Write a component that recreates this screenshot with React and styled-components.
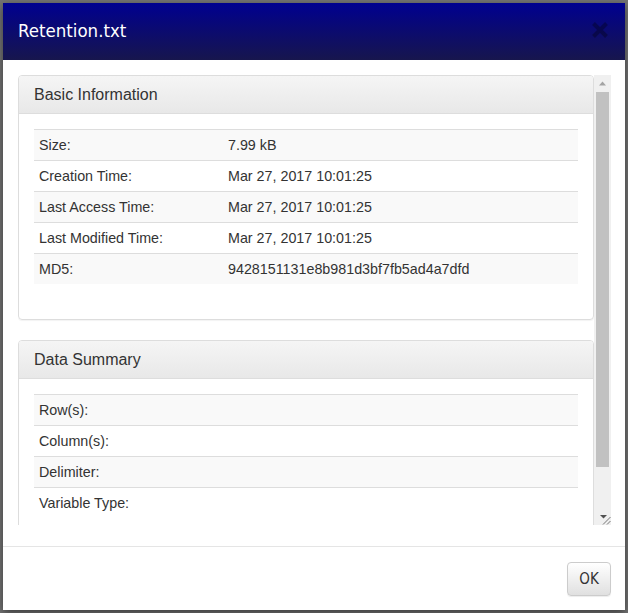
import React from 'react'
import styled, { createGlobalStyle } from 'styled-components'

const Global = createGlobalStyle`
  html, body {
    margin: 0;
    height: 100%;
  }
  body {
    background: #747474;
    padding: 3px;
    box-sizing: border-box;
    font-family: "Liberation Sans", Arial, sans-serif;
    color: #333;
  }
`

const Dialog = styled.div`
  width: 622px;
  height: 607px;
  background: #fff;
  display: flex;
  flex-direction: column;
  box-shadow: 0 3px 9px rgba(0, 0, 0, 0.5);
`

const Header = styled.div`
  height: 57px;
  flex-shrink: 0;
  display: flex;
  align-items: center;
  justify-content: space-between;
  padding: 0 16px 0 15px;
  background: linear-gradient(#000090, #17164d);
`

const Title = styled.h4`
  margin: 0 0 2px;
  font-family: "DejaVu Sans Condensed", sans-serif;
  font-size: 18.5px;
  font-weight: normal;
  color: #fff;
`

const Close = styled.button`
  border: 0;
  padding: 0;
  background: none;
  width: 18px;
  height: 18px;
  margin-bottom: 4px;
  display: flex;
  opacity: 0.3;
`

const Body = styled.div`
  padding: 15px 14px 21px 15px;
`

const ScrollFrame = styled.div`
  height: 450px;
  display: flex;
`

const Viewport = styled.div`
  flex: 1;
  overflow: hidden;
`

const ScrollBar = styled.div`
  width: 17px;
  flex-shrink: 0;
  display: flex;
  flex-direction: column;
  background: #f0f0f0;
`

const ArrowButton = styled.div`
  height: 17px;
  flex-shrink: 0;
  display: flex;
`

const Thumb = styled.div`
  height: ${p => p.$size}px;
  margin: 0 2px;
  background: #c1c1c1;
`

const Track = styled.div`
  flex: 1;
`

const Panel = styled.div`
  border: 1px solid #ddd;
  border-radius: 4px;
  margin-bottom: 20px;
  box-shadow: 0 1px 1px rgba(0, 0, 0, 0.05);
`

const PanelHeading = styled.div`
  padding: 10px 15px;
  border-bottom: 1px solid #ddd;
  border-radius: 3px 3px 0 0;
  background: linear-gradient(#f5f5f5, #e8e8e8);
`

const PanelTitle = styled.h3`
  margin: 0;
  font-size: 16px;
  font-weight: normal;
  line-height: 17px;
  color: #333;
`

const PanelBody = styled.div`
  padding: 15px;
`

const Table = styled.table`
  width: 100%;
  table-layout: fixed;
  border-collapse: collapse;
  margin-bottom: 20px;
  font-size: 14.3px;

  tr:nth-child(odd) {
    background: #f9f9f9;
  }
  td {
    padding: 5px;
    line-height: 20px;
    border-top: 1px solid #ddd;
    vertical-align: top;
  }
  td:first-child {
    width: 179px;
  }
`

const Footer = styled.div`
  border-top: 1px solid #e5e5e5;
  padding: 15px 14px 14px;
  display: flex;
  justify-content: flex-end;
`

const Button = styled.button`
  width: 44px;
  height: 34px;
  border: 1px solid #ccc;
  border-radius: 4px;
  background: linear-gradient(#fff, #e0e0e0);
  box-shadow: 0 1px 1px rgba(0, 0, 0, 0.075);
  font-family: "DejaVu Sans Condensed", sans-serif;
  font-size: 15px;
  color: #333;
  padding: 0;
`

const basic = [
  ['Size:', '7.99 kB'],
  ['Creation Time:', 'Mar 27, 2017 10:01:25'],
  ['Last Access Time:', 'Mar 27, 2017 10:01:25'],
  ['Last Modified Time:', 'Mar 27, 2017 10:01:25'],
  ['MD5:', '9428151131e8b981d3bf7fb5ad4a7dfd'],
]

const summary = [
  ['Row(s):', ''],
  ['Column(s):', ''],
  ['Delimiter:', ''],
  ['Variable Type:', ''],
]

const InfoPanel = ({ title, rows }) => (
  <Panel>
    <PanelHeading>
      <PanelTitle>{title}</PanelTitle>
    </PanelHeading>
    <PanelBody>
      <Table>
        <tbody>
          {rows.map(([k, v]) => (
            <tr key={k}>
              <td>{k}</td>
              <td>{v}</td>
            </tr>
          ))}
        </tbody>
      </Table>
    </PanelBody>
  </Panel>
)

const FakeScrollBar = () => (
  <ScrollBar>
    <ArrowButton>
      <svg width="17" height="17" viewBox="0 0 17 17">
        <path d="M5 10.5 L12 10.5 L8.5 6.5 Z" fill="#a3a3a3" />
      </svg>
    </ArrowButton>
    <Thumb $size={375} />
    <Track />
    <ArrowButton>
      <svg width="17" height="17" viewBox="0 0 17 17">
        <path d="M6 7 L13 7 L9.5 10.5 Z" fill="#505050" />
        <path d="M9 16.5 L16.5 9 M13 16.5 L16.5 13" stroke="#777" strokeWidth="1" />
      </svg>
    </ArrowButton>
  </ScrollBar>
)

export default function App() {
  return (
    <>
      <Global />
      <Dialog>
        <Header>
          <Title>Retention.txt</Title>
          <Close>
            <svg width="18" height="18" viewBox="0 0 18 18">
              <path d="M2.5 2.5 L15.5 15.5 M15.5 2.5 L2.5 15.5" stroke="#000" strokeWidth="4" />
            </svg>
          </Close>
        </Header>
        <Body>
          <ScrollFrame>
            <Viewport>
              <InfoPanel title="Basic Information" rows={basic} />
              <InfoPanel title="Data Summary" rows={summary} />
            </Viewport>
            <FakeScrollBar />
          </ScrollFrame>
        </Body>
        <Footer>
          <Button>OK</Button>
        </Footer>
      </Dialog>
    </>
  )
}
